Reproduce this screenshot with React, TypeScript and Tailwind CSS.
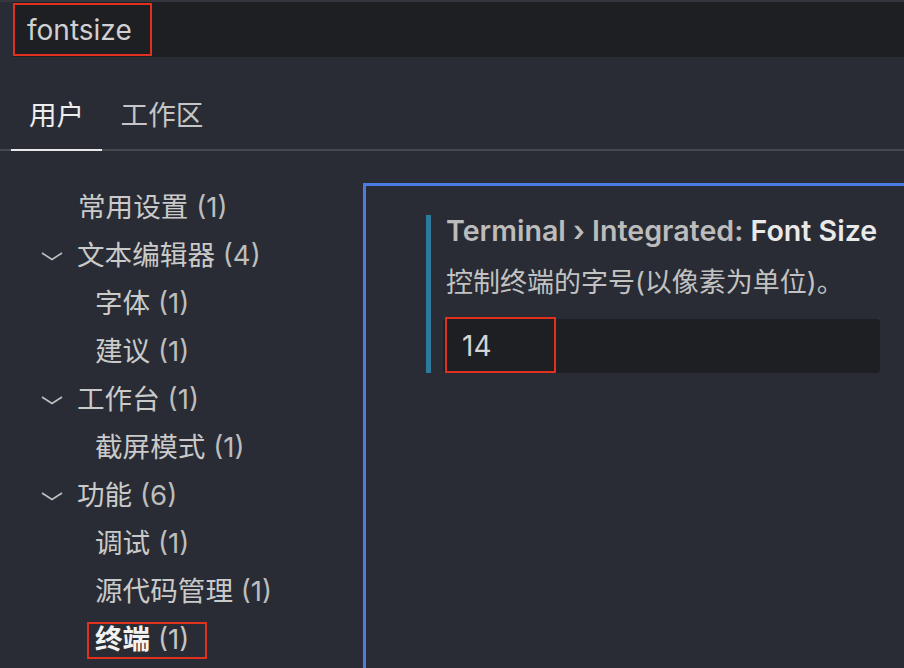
import React from 'react';

type Item = { label: string; count: number; level: 0 | 1; chevron?: boolean; active?: boolean };

const items: Item[] = [
  { label: '常用设置', count: 1, level: 0 },
  { label: '文本编辑器', count: 4, level: 0, chevron: true },
  { label: '字体', count: 1, level: 1 },
  { label: '建议', count: 1, level: 1 },
  { label: '工作台', count: 1, level: 0, chevron: true },
  { label: '截屏模式', count: 1, level: 1 },
  { label: '功能', count: 6, level: 0, chevron: true },
  { label: '调试', count: 1, level: 1 },
  { label: '源代码管理', count: 1, level: 1 },
  { label: '终端', count: 1, level: 1, active: true },
];

const Chevron = () => (
  <svg width="22" height="10" viewBox="0 0 22 10" className="shrink-0">
    <polyline points="1,2 11,8.5 21,2" fill="none" stroke="#bfc0c2" strokeWidth="1.6" />
  </svg>
);

const TreeRow: React.FC<{ item: Item }> = ({ item }) => {
  if (item.active) {
    return (
      <div className="h-[48px] flex items-center pl-[87px]">
        <span className="h-[37px] w-[120px] border-2 border-[#e0301e] flex items-center px-[6px] whitespace-nowrap">
          <span className="font-bold text-[#f2f2f2]">{item.label}</span>
          <span className="text-[#c4c4c4]">&nbsp;({item.count})</span>
        </span>
      </div>
    );
  }
  if (item.chevron) {
    return (
      <div className="h-[48px] flex items-center pl-[41px] gap-[14px] whitespace-nowrap">
        <Chevron />
        <span>
          {item.label} <span className="text-[#bdbdbd]">({item.count})</span>
        </span>
      </div>
    );
  }
  return (
    <div className={`h-[48px] flex items-center whitespace-nowrap ${item.level === 0 ? 'pl-[78px]' : 'pl-[95px]'}`}>
      <span>
        {item.label} <span className="text-[#bdbdbd]">({item.count})</span>
      </span>
    </div>
  );
};

export default function App() {
  return (
    <div
      className="w-[904px] h-[668px] overflow-hidden bg-[#292c34] text-[#cacaca] text-[27.6px] leading-none"
      style={{ fontFamily: 'Inter, "Noto Sans CJK SC", sans-serif' }}
    >
      <div className="h-[2px] bg-[#34373e]" />
      {/* search */}
      <div className="h-[56px] ml-[13px] bg-[#1e1f23] border-b border-[#2c2e33] pt-[1px]">
        <div className="w-[139px] h-[53px] border-2 border-[#e0301e] flex items-center pl-[12px] text-[28px] text-[#d0d0d0]">
          fontsize
        </div>
      </div>

      {/* tabs */}
      <div className="flex pl-[11px] border-b-2 border-[#46494f] h-[93px]">
        <div className="w-[91px] h-[93px] -mb-[2px] border-b-2 border-[#e8e8e8] flex items-center justify-center pt-[25px] text-[#ededed]">
          用户
        </div>
        <div className="w-[120px] h-[91px] flex items-center justify-center pt-[25px] text-[#c6c6c6]">
          工作区
        </div>
      </div>

      {/* body */}
      <div className="flex">
        <div className="w-[363px] shrink-0 pt-[33px]">
          {items.map((it) => (
            <TreeRow key={it.label} item={it} />
          ))}
        </div>

        <div className="flex-1 mt-[32px] h-[600px] border-l-[3px] border-t-[3px] border-[#4b7ce4] pl-[60px] pt-[29px]">
          <div className="flex">
            <div className="w-[5px] bg-[#2c7b9c] shrink-0" />
            <div className="pl-[12px]">
              <div className="h-[32px] flex items-center pl-[3px] font-semibold text-[28.6px] whitespace-nowrap">
                <span className="text-[#bcbcbc]">Terminal › Integrated:&nbsp;</span>
                <span className="text-[#e9e9e9]">Font Size</span>
              </div>
              <div className="h-[32px] mt-[19px] flex items-center pl-[3px] text-[27px] text-[#c2c2c2] whitespace-nowrap">
                控制终端的字号(以像素为单位)。
              </div>
              <div className="relative mt-[21px] w-[437px] h-[54px] rounded-[4px] bg-[#1e1f23] flex items-center pl-[19px] text-[28px] text-[#d4d4d4]">
                14
                <span className="absolute left-[2px] -top-[2px] w-[111px] h-[56px] border-2 border-[#e0301e]" />
              </div>
            </div>
          </div>
        </div>
      </div>
    </div>
  );
}
